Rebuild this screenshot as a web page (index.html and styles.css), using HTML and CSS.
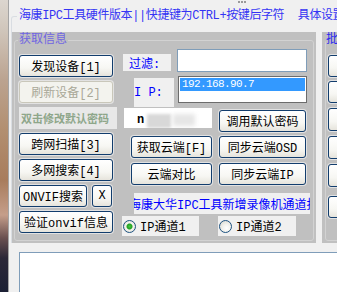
FILE: index.html
```html
<!DOCTYPE html>
<html lang="zh-CN">
<head>
    <meta charset="UTF-8">
    <title>海康IPC工具</title>
    <link rel="stylesheet" href="styles.css">
</head>
<body>
    <div class="wall"></div>
    <div class="app">
        <div class="grip"></div>
        <fieldset class="main-group">
            <legend>海康IPC工具硬件版本||快捷键为CTRL+按键后字符  具体设置</legend>
            <div class="panels">
                <!-- 左侧：获取信息 -->
                <div class="panel panel-left">
                    <fieldset class="grp">
                        <legend>获取信息</legend>
                        <div class="grp-body">
                            <div class="col-left">
                                <button class="btn">发现设备[1]</button>
                                <button class="btn disabled">刷新设备[2]</button>
                                <div class="hint">双击修改默认密码</div>
                                <button class="btn">跨网扫描[3]</button>
                                <button class="btn">多网搜索[4]</button>
                                <div class="row-onvif">
                                    <button class="btn btn-onvif">ONVIF搜索</button>
                                    <button class="btn btn-x">X</button>
                                </div>
                                <button class="btn">验证onvif信息</button>
                            </div>
                            <div class="col-mid">
                                <div class="row">
                                    <div class="lbl lbl-filter">过滤:</div>
                                    <div class="text-input"></div>
                                </div>
                                <div class="row row-ip">
                                    <div class="lbl lbl-ip">I P:</div>
                                    <div class="listbox">
                                        <div class="list-item selected">192.168.90.7</div>
                                    </div>
                                </div>
                                <div class="row row-pwd">
                                    <div class="blur-box">
                                        <span class="blur-n">n</span>
                                        <span class="blur-a"></span>
                                        <span class="blur-b"></span>
                                    </div>
                                    <button class="btn btn-r">调用默认密码</button>
                                </div>
                                <div class="row row-cloud1">
                                    <button class="btn btn-l">获取云端[F]</button>
                                    <button class="btn btn-r">同步云端OSD</button>
                                </div>
                                <div class="row row-cloud2">
                                    <button class="btn btn-l">云端对比</button>
                                    <button class="btn btn-r">同步云端IP</button>
                                </div>
                                <div class="banner"><span>海康大华IPC工具新增录像机通道报告功能</span></div>
                                <div class="row row-radio">
                                    <label class="radio radio-1"><span class="dot checked"></span>IP通道1</label>
                                    <label class="radio radio-2"><span class="dot"></span>IP通道2</label>
                                </div>
                            </div>
                        </div>
                    </fieldset>
                </div>
                <!-- 右侧：批量 -->
                <div class="panel panel-right">
                    <fieldset class="grp grp-right">
                        <legend>批量操作</legend>
                        <div class="col-right">
                            <button class="btn">批量修改</button>
                            <button class="btn">批量修改</button>
                            <button class="btn tall">批量修改</button>
                            <button class="btn tall">批量修改</button>
                            <button class="btn tall">批量修改</button>
                            <button class="btn last">批量修改</button>
                        </div>
                    </fieldset>
                </div>
            </div>
        </fieldset>
        <div class="log"></div>
    </div>
</body>
</html>
```

FILE: styles.css
```css
/* 基础 */
body {
    margin: 0;
    width: 337px;
    height: 292px;
    overflow: hidden;
    display: flex;
    background-color: #f0f0f0;
    font-family: "Liberation Mono", "Noto Sans CJK SC", monospace;
    font-size: 12px;
    color: #000;
}

/* 左边露出的桌面 */
.wall {
    width: 8px;
    flex: none;
    background: linear-gradient(to bottom, #dcd6cf 0, #d0c6bb 30px, #bba390 80px, #b28f70 130px, #a87c5c 180px, #c59e8a 215px, #6a5050 238px, #2c2838 258px, #1c2034 292px);
}

.app {
    flex: 1;
    min-width: 0;
    border-left: 1px solid #a4a4a4;
    display: flex;
    flex-direction: column;
    overflow: hidden;
}

.grip {
    width: 8px;
    height: 0;
    margin-left: 229px;
    border-top: 2px dotted #9a9a9a;
    margin-top: 1px;
}

/* 外层分组框 */
.main-group {
    flex: none;
    width: 400px;
    min-width: 0;
    margin: 6px 0 0 2px;
    padding: 0;
    border: 1px solid #d9dde2;
    border-bottom: none;
    border-radius: 3px 3px 0 0;
}

.main-group > legend {
    margin-left: 5px;
    padding: 0 2px;
    line-height: 14px;
    white-space: pre;
    color: #3434f4;
    letter-spacing: -0.4px;
}

.panels {
    display: flex;
    gap: 6px;
    margin-top: 9px;
    height: 211px;
}

.panel {
    flex: none;
    background-color: #c0c0c0;
    padding-top: 1px;
    box-sizing: border-box;
}

.panel-left {
    width: 304px;
}

.panel-right {
    width: 80px;
}

/* 内层分组框 */
.grp {
    margin: 0 2px;
    padding: 0;
    height: 208px;
    box-sizing: border-box;
    min-width: 0;
    border: 1px solid #d2d2d2;
    border-radius: 3px;
}

.grp > legend {
    margin-left: 3px;
    padding: 0 1px;
    line-height: 14px;
    color: #7066e2;
}

.grp-right {
    margin: 0 0 0 3px;
}

.grp-right > legend {
    margin-left: 0;
    padding: 0;
    color: #2a2af0;
    white-space: nowrap;
}

.grp-body {
    display: flex;
    padding-left: 4px;
}

/* 按钮 */
.btn {
    box-sizing: border-box;
    height: 22px;
    padding: 0;
    font: inherit;
    color: #000;
    border: 1px solid #123d6d;
    border-radius: 3px;
    background: linear-gradient(to bottom, #ffffff 0%, #f7f7f3 60%, #e6e4dc 100%);
    box-shadow: 0 0 0 1px #e2e2e2;
    white-space: nowrap;
    cursor: pointer;
}

.btn.disabled {
    color: #a9a898;
    border-color: #c9c7ba;
    background: #f3f3ee;
}

.col-left {
    width: 98px;
    margin-top: 8px;
    display: flex;
    flex-direction: column;
    gap: 4px;
}

.col-left > .btn {
    width: 94px;
}

.hint {
    height: 22px;
    background-color: #e8e8e8;
    color: #8ea68a;
    font-size: 11px;
    font-weight: bold;
    display: flex;
    align-items: center;
    padding-left: 2px;
    white-space: nowrap;
}

.row-onvif {
    display: flex;
    gap: 5px;
}

.btn-onvif {
    width: 68px;
}

.btn-x {
    width: 20px;
}

/* 中间列 */
.col-mid {
    margin: 2px 0 0 4px;
    display: flex;
    flex-direction: column;
}

.row {
    display: flex;
    align-items: flex-start;
}

.lbl {
    background-color: #f0f0f0;
    color: #0000ff;
    display: flex;
    align-items: center;
    white-space: pre;
}

.lbl-filter {
    margin: 5px 0 0 2px;
    width: 48px;
    height: 17px;
    padding-left: 6px;
    box-sizing: border-box;
}

.text-input {
    margin-left: 6px;
    width: 130px;
    height: 23px;
    box-sizing: border-box;
    background-color: #fff;
    border: 1px solid #7f9db9;
}

.row-ip {
    margin-top: 4px;
}

.lbl-ip {
    margin: 2px 0 0 13px;
    width: 40px;
    height: 29px;
}

.listbox {
    margin-left: 4px;
    width: 129px;
    height: 27px;
    box-sizing: border-box;
    background-color: #fff;
    border: 1px solid #6c6c6c;
    padding: 1px;
}

.list-item {
    height: 13px;
    line-height: 13px;
    font-size: 11px;
    letter-spacing: -0.6px;
    padding-left: 2px;
}

.list-item.selected {
    background-color: #3399ff;
    color: #fff;
}

.row-pwd {
    margin-top: 1px;
}

.blur-box {
    margin-left: 3px;
    width: 88px;
    height: 20px;
    background-color: #fff;
    display: flex;
    align-items: flex-end;
    overflow: hidden;
}

.blur-n {
    margin: 0 0 2px 13px;
    font-weight: bold;
    line-height: 12px;
}

.blur-a {
    width: 24px;
    height: 14px;
    margin-left: 3px;
    background-color: #d8d8d8;
    filter: blur(1.5px);
}

.blur-b {
    width: 22px;
    height: 12px;
    margin: 0 0 2px 2px;
    background-color: #e6e6e6;
    filter: blur(2px);
}

.btn-r {
    margin: 2px 0 0 7px;
    width: 87px;
}

.row-cloud1 {
    margin-top: 4px;
}

.row-cloud2 {
    margin-top: 5px;
}

.row-cloud1 .btn-r,
.row-cloud2 .btn-r {
    margin-top: 0;
}

.btn-l {
    margin-left: 10px;
    width: 81px;
}

/* 滚动公告 */
.banner {
    margin: 8px 0 0 13px;
    width: 176px;
    height: 21px;
    background-color: #f0f0f0;
    color: #0000ff;
    overflow: hidden;
    white-space: nowrap;
    display: flex;
    align-items: center;
}

.banner span {
    margin-left: -5px;
}

/* 单选框 */
.row-radio {
    margin-top: 2px;
}

.radio {
    height: 20px;
    background-color: #f0f0f0;
    display: flex;
    align-items: center;
    gap: 4px;
    white-space: nowrap;
}

.radio-1 {
    margin-left: 1px;
    width: 77px;
}

.radio-2 {
    margin-left: 19px;
    width: 78px;
}

.dot {
    width: 13px;
    height: 13px;
    box-sizing: border-box;
    border-radius: 50%;
    border: 1px solid #1c5180;
    background: radial-gradient(circle at 60% 65%, #ffffff 0, #f2f2ee 40%, #d4d2c8 100%);
    margin-left: 1px;
}

.dot.checked {
    background: radial-gradient(circle, #46c446 0, #21a121 2.5px, #f4f4f0 3.5px, #d8d6cc 100%);
}

/* 右侧按钮列 */
.col-right {
    margin: 8px 0 0 2px;
    display: flex;
    flex-direction: column;
    gap: 4px;
}

.col-right .btn {
    width: 70px;
}

.col-right .btn.tall {
    height: 23px;
    margin-top: 1px;
}

.col-right .btn.last {
    margin-top: 5px;
}

/* 底部日志框 */
.log {
    flex: 1;
    width: 340px;
    margin: 9px 0 0 10px;
    background-color: #fff;
    border: 1px solid #7f9db9;
    border-right: none;
    border-bottom: none;
}
```
